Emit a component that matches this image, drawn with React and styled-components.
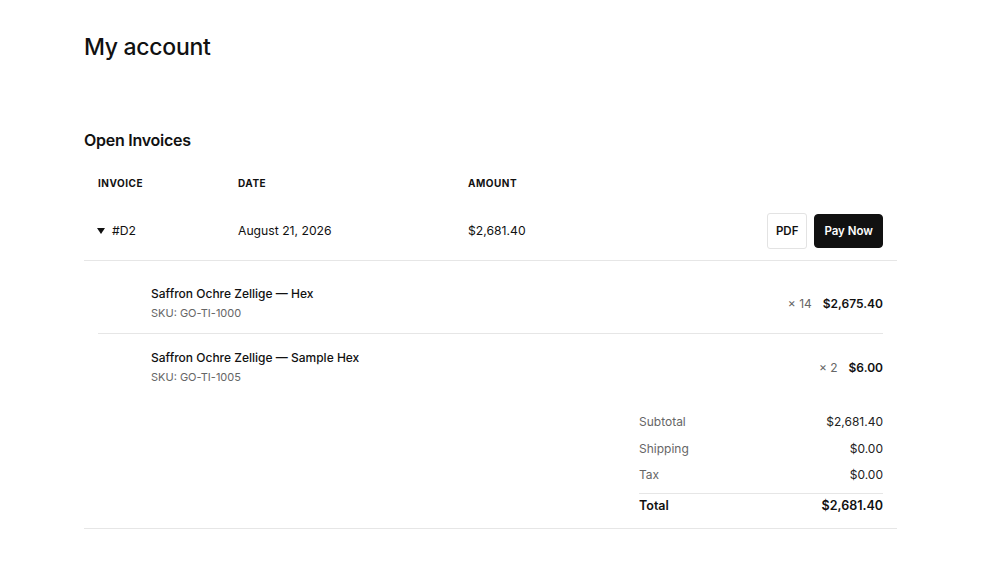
import React from "react";
import styled, { createGlobalStyle } from "styled-components";

const Global = createGlobalStyle`
  html, body { margin: 0; padding: 0; background: #fff; }
  body { font-family: Inter, "Noto Sans", Arial, sans-serif; color: #111; -webkit-font-smoothing: antialiased; }
  * { box-sizing: border-box; }
`;

const Page = styled.div`
  width: 813px;
  margin-left: 84px;
  padding-top: 32px;
`;

const Title = styled.h1`
  margin: 0;
  font-size: 23px;
  line-height: 30px;
  font-weight: 500;
  letter-spacing: -0.3px;
`;

const SectionTitle = styled.h2`
  margin: 67px 0 14px;
  font-size: 16px;
  line-height: 22px;
  font-weight: 600;
  letter-spacing: -0.25px;
`;

const Row = styled.div`
  display: grid;
  grid-template-columns: 140px 230px 1fr auto;
  align-items: center;
  padding: 0 14px;
  height: ${(p) => p.$h}px;
  border-bottom: ${(p) => (p.$border ? "1px solid #e6e6e6" : "none")};
`;

const HeadCell = styled.div`
  font-size: 10px;
  font-weight: 700;
  letter-spacing: 0.5px;
  text-transform: uppercase;
`;

const Cell = styled.div`
  font-size: 12.2px;
  display: flex;
  align-items: center;
  gap: 7px;
`;

const Caret = styled.span`
  width: 0;
  height: 0;
  border-left: 4px solid transparent;
  border-right: 4px solid transparent;
  border-top: 6px solid #111;
  margin-left: -1px;
`;

const Actions = styled.div`
  display: flex;
  gap: 7px;
  align-items: center;
`;

const Button = styled.button`
  font-family: inherit;
  font-size: 11.5px;
  font-weight: 600;
  height: ${(p) => (p.$primary ? 34 : 36)}px;
  padding: 0 ${(p) => (p.$primary ? 9 : 8)}px;
  border-radius: ${(p) => (p.$primary ? 4 : 3)}px;
  border: 1px solid ${(p) => (p.$primary ? "#111" : "#e3e3e3")};
  background: ${(p) => (p.$primary ? "#111" : "#fff")};
  color: ${(p) => (p.$primary ? "#fff" : "#111")};
  cursor: pointer;
`;

const Panel = styled.div`
  padding: 10px 14px 13px;
  border-bottom: 1px solid #e6e6e6;
`;

const Item = styled.div`
  display: flex;
  align-items: center;
  justify-content: space-between;
  padding: ${(p) => (p.$first ? 14 : 15)}px 0 12px 53px;
  border-bottom: ${(p) => (p.$border ? "1px solid #e6e6e6" : "none")};
`;

const ItemInfo = styled.div`
  display: flex;
  flex-direction: column;
  gap: 2px;
`;

const ItemName = styled.div`
  font-size: 12px;
  line-height: 18px;
  font-weight: 500;
`;

const Sku = styled.div`
  font-size: 11px;
  line-height: 16px;
  color: #666;
`;

const Price = styled.div`
  display: flex;
  align-items: center;
  gap: 11px;
  font-size: 12px;
`;

const Qty = styled.span`
  color: #666;
  font-size: 12px;
`;

const Strong = styled.span`
  font-weight: 600;
`;

const Summary = styled.div`
  width: 244px;
  margin: 16px 0 0 auto;
  display: flex;
  flex-direction: column;
`;

const SumRow = styled.div`
  display: flex;
  justify-content: space-between;
  font-size: 12px;
  line-height: 18px;
  margin-bottom: 8.5px;
  color: #222;
  font-weight: 400;
  ${(p) => p.$total && "color: #111; font-weight: 600; border-top: 1px solid #e6e6e6; padding-top: 3px; margin-bottom: 0; font-size: 12.5px;"}
`;

const Label = styled.span`
  color: ${(p) => (p.$total ? "#111" : "#666")};
`;

const items = [
  { name: "Saffron Ochre Zellige — Hex", sku: "GO-TI-1000", qty: 14, price: "$2,675.40" },
  { name: "Saffron Ochre Zellige — Sample Hex", sku: "GO-TI-1005", qty: 2, price: "$6.00" },
];

export default function App() {
  return (
    <>
      <Global />
      <Page>
        <Title>My account</Title>
        <SectionTitle>Open Invoices</SectionTitle>
        <Row $h={36}>
          <HeadCell>Invoice</HeadCell>
          <HeadCell>Date</HeadCell>
          <HeadCell>Amount</HeadCell>
          <div />
        </Row>
        <Row $h={60} $border>
          <Cell>
            <Caret />
            #D2
          </Cell>
          <Cell>August 21, 2026</Cell>
          <Cell>$2,681.40</Cell>
          <Actions>
            <Button>PDF</Button>
            <Button $primary>Pay Now</Button>
          </Actions>
        </Row>
        <Panel>
          {items.map((it, i) => (
            <Item key={it.sku} $first={i === 0} $border={i < items.length - 1}>
              <ItemInfo>
                <ItemName>{it.name}</ItemName>
                <Sku>SKU: {it.sku}</Sku>
              </ItemInfo>
              <Price>
                <Qty>× {it.qty}</Qty>
                <Strong>{it.price}</Strong>
              </Price>
            </Item>
          ))}
          <Summary>
            <SumRow>
              <Label>Subtotal</Label>
              <span>$2,681.40</span>
            </SumRow>
            <SumRow>
              <Label>Shipping</Label>
              <span>$0.00</span>
            </SumRow>
            <SumRow>
              <Label>Tax</Label>
              <span>$0.00</span>
            </SumRow>
            <SumRow $total>
              <Label $total>Total</Label>
              <span>$2,681.40</span>
            </SumRow>
          </Summary>
        </Panel>
      </Page>
    </>
  );
}
